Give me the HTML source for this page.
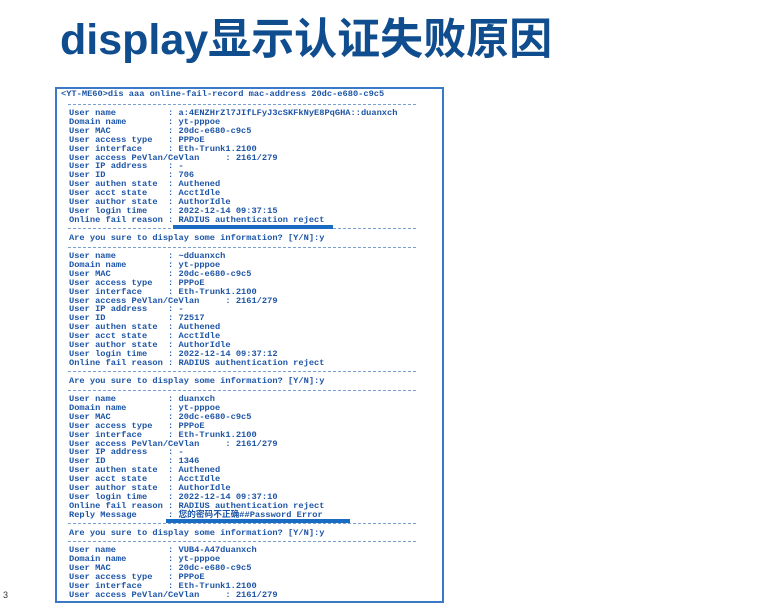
<!DOCTYPE html>
<html><head><meta charset="utf-8"><style>
html,body{margin:0;padding:0;background:#fff;width:758px;height:612px;overflow:hidden;position:relative}
.t{position:absolute;left:60px;top:12px;font-family:"Liberation Sans","Noto Sans CJK SC",sans-serif;font-weight:bold;font-size:43px;color:#0f4d8e;line-height:56px;white-space:nowrap}
.box{position:absolute;left:55px;top:87px;width:385px;height:512px;border:2px solid #3a78c8;background:#fff}
pre{position:absolute;margin:0;font-family:"Liberation Mono","Noto Sans CJK SC",monospace;font-weight:bold;font-size:8.7px;line-height:8.9px;color:#1d55a6;white-space:pre}
.d{position:absolute;left:68px;width:348px;border-top:1px dashed #7aa0d0}
.bar{position:absolute;height:4px;background:#1a6cc2}
.n{position:absolute;left:3px;top:590px;font-family:"Liberation Sans",sans-serif;font-size:9px;color:#333}
</style></head><body>
<div class="t">display显示认证失败原因</div>
<div class="box"></div>
<pre style="left:61px;top:90px">&lt;YT-ME60&gt;dis aaa online-fail-record mac-address 20dc-e680-c9c5</pre>
<div class="d" style="top:104px"></div>
<pre style="left:69px;top:109px">User name          : a:4ENZHrZl7JIfLFyJ3cSKFkNyE8PqGHA::duanxch
Domain name        : yt-pppoe
User MAC           : 20dc-e680-c9c5
User access type   : PPPoE
User interface     : Eth-Trunk1.2100
User access PeVlan/CeVlan     : 2161/279
User IP address    : -
User ID            : 706
User authen state  : Authened
User acct state    : AcctIdle
User author state  : AuthorIdle
User login time    : 2022-12-14 09:37:15
Online fail reason : RADIUS authentication reject</pre>
<div class="d" style="top:228px"></div>
<div class="bar" style="left:173px;top:225px;width:160px"></div>
<pre style="left:69px;top:234px">Are you sure to display some information? [Y/N]:y</pre>
<div class="d" style="top:247px"></div>
<pre style="left:69px;top:252px">User name          : ~dduanxch
Domain name        : yt-pppoe
User MAC           : 20dc-e680-c9c5
User access type   : PPPoE
User interface     : Eth-Trunk1.2100
User access PeVlan/CeVlan     : 2161/279
User IP address    : -
User ID            : 72517
User authen state  : Authened
User acct state    : AcctIdle
User author state  : AuthorIdle
User login time    : 2022-12-14 09:37:12
Online fail reason : RADIUS authentication reject</pre>
<div class="d" style="top:371px"></div>
<pre style="left:69px;top:377px">Are you sure to display some information? [Y/N]:y</pre>
<div class="d" style="top:390px"></div>
<pre style="left:69px;top:395px">User name          : duanxch
Domain name        : yt-pppoe
User MAC           : 20dc-e680-c9c5
User access type   : PPPoE
User interface     : Eth-Trunk1.2100
User access PeVlan/CeVlan     : 2161/279
User IP address    : -
User ID            : 1346
User authen state  : Authened
User acct state    : AcctIdle
User author state  : AuthorIdle
User login time    : 2022-12-14 09:37:10
Online fail reason : RADIUS authentication reject
Reply Message      : 您的密码不正确##Password Error</pre>
<div class="bar" style="left:166px;top:519px;width:184px"></div>
<div class="d" style="top:523px"></div>
<pre style="left:69px;top:529px">Are you sure to display some information? [Y/N]:y</pre>
<div class="d" style="top:541px"></div>
<pre style="left:69px;top:546px">User name          : VUB4-A47duanxch
Domain name        : yt-pppoe
User MAC           : 20dc-e680-c9c5
User access type   : PPPoE
User interface     : Eth-Trunk1.2100
User access PeVlan/CeVlan     : 2161/279</pre>
<div class="n">3</div>
</body></html>
